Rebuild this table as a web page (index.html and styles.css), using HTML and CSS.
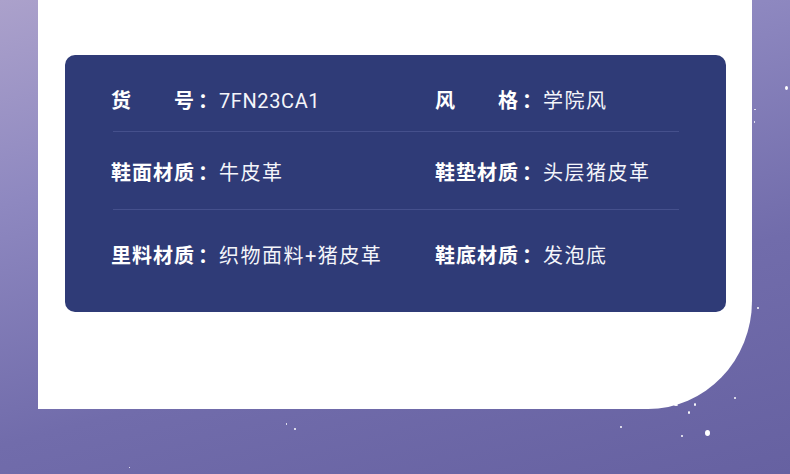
FILE: index.html
```html
<!DOCTYPE html>
<html lang="zh-CN">
<head>
<meta charset="utf-8">
<link rel="stylesheet" href="styles.css">
</head>
<body>
<div class="page">
  <div class="card">
    <div class="spec">
      <div class="row row-1">
        <div class="cell"><span class="label">货号</span><span class="colon">：</span><span class="value latin">7FN23CA1</span></div>
        <div class="cell"><span class="label">风格</span><span class="colon">：</span><span class="value">学院风</span></div>
      </div>
      <div class="divider"></div>
      <div class="row row-2">
        <div class="cell"><span class="label">鞋面材质</span><span class="colon">：</span><span class="value">牛皮革</span></div>
        <div class="cell"><span class="label">鞋垫材质</span><span class="colon">：</span><span class="value">头层猪皮革</span></div>
      </div>
      <div class="divider"></div>
      <div class="row row-3">
        <div class="cell"><span class="label">里料材质</span><span class="colon">：</span><span class="value">织物面料+猪皮革</span></div>
        <div class="cell"><span class="label">鞋底材质</span><span class="colon">：</span><span class="value">发泡底</span></div>
      </div>
    </div>
  </div>
  <span class="spark s1"></span>
  <span class="spark s2"></span>
  <span class="spark s3"></span>
  <span class="spark s4"></span>
  <span class="spark s5"></span>
  <span class="spark s6"></span>
  <span class="spark s7"></span>
  <span class="spark s8"></span>
  <span class="spark s9"></span>
  <span class="spark s10"></span>
  <span class="spark s11"></span>
  <span class="spark s12"></span>
  <span class="spark s13"></span>
  <span class="spark s14"></span>
</div>
</body>
</html>
```
FILE: styles.css
```css
html, body {
  margin: 0;
  padding: 0;
}
body {
  width: 790px;
  height: 474px;
  overflow: hidden;
  font-family: Roboto, "Noto Sans CJK SC", sans-serif;
}
.page {
  position: relative;
  width: 790px;
  height: 474px;
  background: linear-gradient(165deg, #aba1cb 0%, #8e88c0 30%, #716cab 65%, #6661a1 100%);
  overflow: hidden;
}
.card {
  margin-left: 38px;
  width: 714px;
  height: 409px;
  background: #ffffff;
  border-bottom-right-radius: 104px 108px;
  padding-top: 55px;
  box-sizing: border-box;
}
.spec {
  margin-left: 27px;
  width: 661px;
  height: 257px;
  background: #2f3b77;
  border-radius: 10px;
  padding: 0 46px;
  box-sizing: border-box;
  color: #ffffff;
}
.row {
  display: grid;
  grid-template-columns: 324px 1fr;
  font-size: 20px;
  line-height: 20px;
  letter-spacing: 1px;
}
.row-1 { padding: 36px 0 20px; }
.row-2 { padding: 31px 0 26px; }
.row-3 { padding: 36px 0 0; }
.cell {
  display: flex;
  align-items: center;
  white-space: nowrap;
}
.label {
  display: inline-block;
  width: 84px;
  font-weight: 700;
  text-align: justify;
  text-align-last: justify;
}
.colon {
  margin-left: 3px;
  font-weight: 700;
}
.value {
  margin-left: 0;
  font-weight: 400;
  letter-spacing: 1.5px;
  color: #f4f5fa;
}
.latin {
  letter-spacing: 0.6px;
}
.divider {
  height: 1px;
  margin: 0 1px 0 2px;
  background: #45508c;
}
.spark {
  position: absolute;
  width: 2px;
  height: 2px;
  border-radius: 50%;
  background: #ffffff;
}
.s1 { left: 785px; top: 86px; width: 3px; height: 4px; }
.s2 { left: 754px; top: 109px; width: 2px; height: 1px; }
.s3 { left: 754px; top: 121px; width: 1px; height: 2px; }
.s4 { left: 757px; top: 307px; }
.s5 { left: 674px; top: 404px; width: 4px; height: 2px; }
.s6 { left: 694px; top: 403px; width: 2px; height: 3px; }
.s7 { left: 688px; top: 411px; width: 2px; height: 3px; }
.s8 { left: 620px; top: 426px; }
.s9 { left: 681px; top: 435px; }
.s10 { left: 705px; top: 430px; width: 5px; height: 6px; }
.s11 { left: 734px; top: 397px; }
.s12 { left: 286px; top: 423px; width: 1px; height: 2px; }
.s13 { left: 294px; top: 428px; }
.s14 { left: 129px; top: 467px; width: 1px; height: 1px; }
```
